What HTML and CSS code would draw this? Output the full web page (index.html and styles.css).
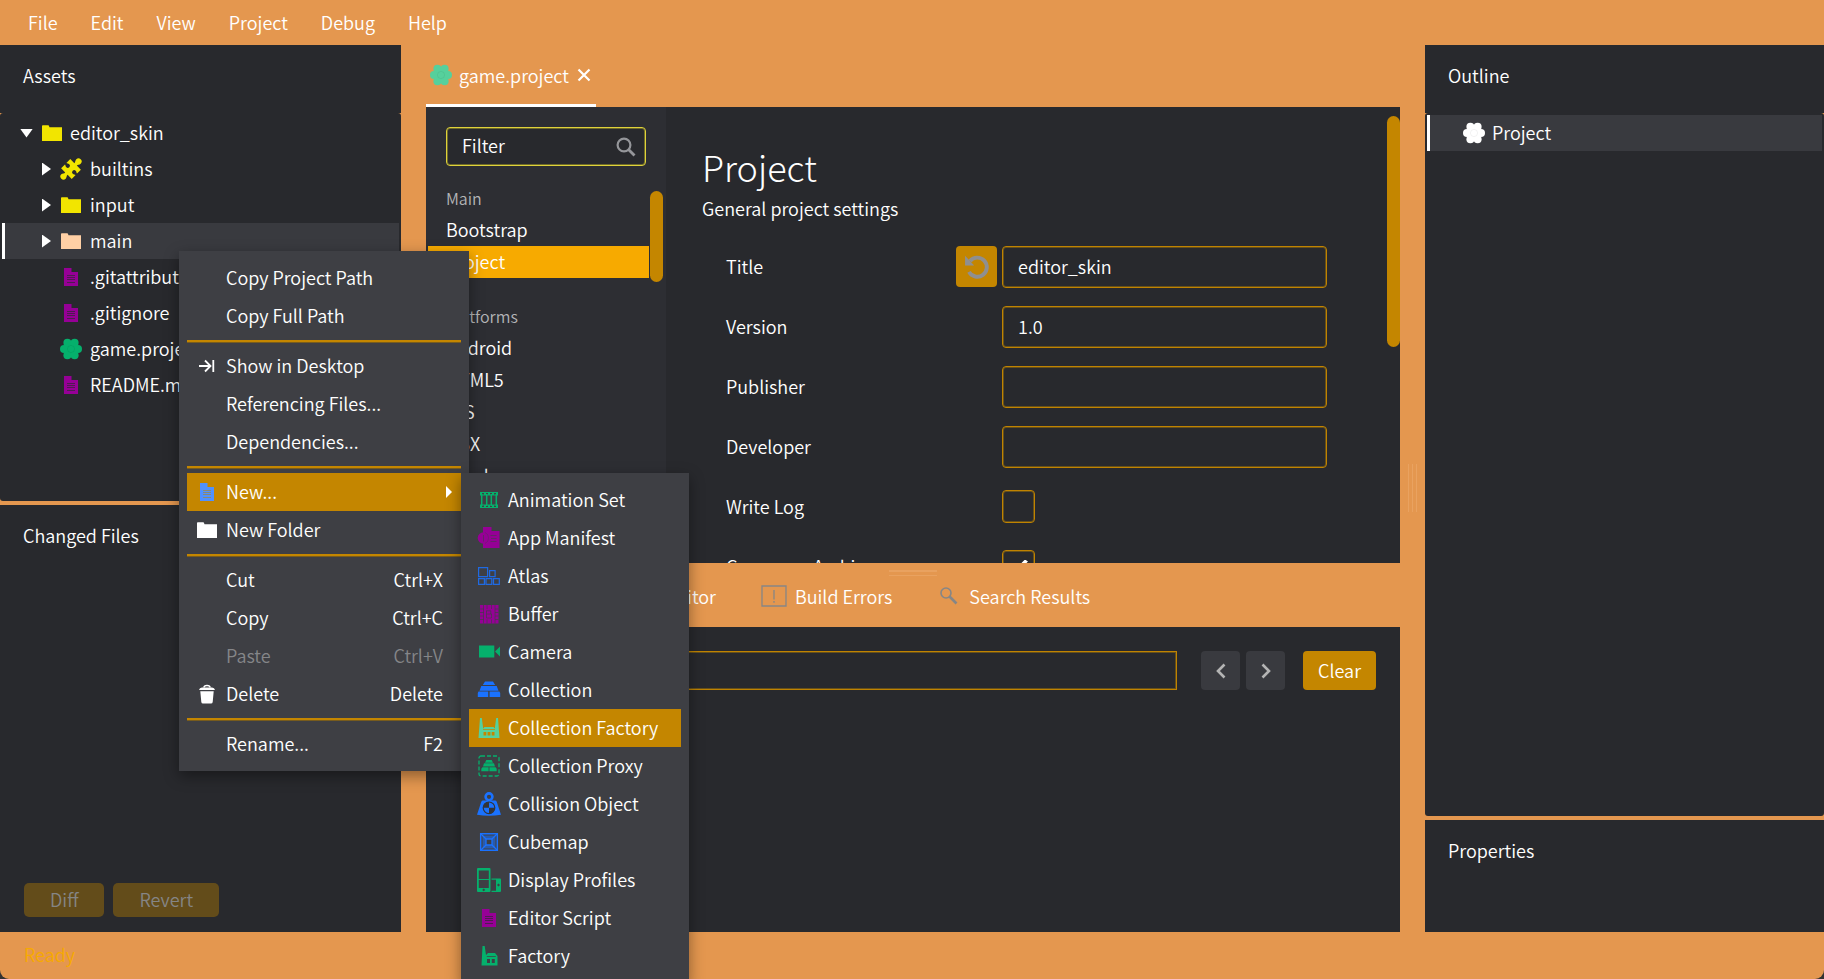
FILE: index.html
```html
<!DOCTYPE html>
<html lang="en">
<head>
<meta charset="utf-8">
<title>editor_skin</title>
<link rel="stylesheet" href="styles.css">
</head>
<body>
<svg class="sprite" aria-hidden="true">
  <symbol id="cog" viewBox="0 0 24 24">
    <g fill="currentColor"><circle cx="12" cy="12" r="7.4"/><circle cx="5" cy="12" r="4"/><circle cx="19" cy="12" r="4"/><circle cx="8.4" cy="5.8" r="4"/><circle cx="15.6" cy="5.8" r="4"/><circle cx="8.4" cy="18.2" r="4"/><circle cx="15.6" cy="18.2" r="4"/></g>
    <circle cx="12" cy="12" r="3.6" fill="none" stroke="#000" stroke-opacity=".05"/>
  </symbol>
  <symbol id="folder" viewBox="0 0 24 24">
    <path fill="currentColor" d="M2 5q0-.8.8-.8h5.400q.8 0 .8.8l.5 1.200H22V20H2z"/>
  </symbol>
  <symbol id="puzzle" viewBox="0 0 24 24">
    <path fill="currentColor" transform="rotate(45 12 12)" d="M4.500 5.500H10.300C10.500 4 8.900 3.200 8.900 1.400A3.100 3.100 0 0 1 15.100 1.400C15.100 3.200 13.500 4 13.700 5.500H19.500V11C18.500 11 18 9.900 16.500 9.900A2.100 2.100 0 0 0 16.500 14.100C18 14.100 18.500 13 19.500 13V18.500H13.700C13.500 20 15.100 20.800 15.100 22.600A3.100 3.100 0 0 1 8.900 22.600C8.900 20.800 10.500 20 10.300 18.500H4.500V13C5.500 13 6 14.100 7.500 14.100A2.100 2.100 0 0 0 7.500 9.900C6 9.900 5.500 11 4.500 11z"/>
  </symbol>
  <symbol id="doc" viewBox="0 0 24 24">
    <path fill="currentColor" d="M5 3h7.500v4H19v14H5z"/>
    <path fill="none" stroke="#28292d" stroke-opacity=".65" stroke-width="1" d="M8 10.500h8M8 12.500h8M8 14.500h8M8 17.500h8"/>
  </symbol>
  <symbol id="doc-light" viewBox="0 0 24 24">
    <path fill="currentColor" d="M5 3h7.500v4H19v14H5z"/>
    <path fill="none" stroke="#8c8a70" stroke-width="1" d="M8 10.500h8M8 12.500h8M8 14.500h8M8 17.500h8"/>
  </symbol>
  <symbol id="to-end" viewBox="0 0 24 24">
    <path fill="none" stroke="currentColor" stroke-width="1.800" d="M4 12h11M10 6.500l5.500 5.500-5.500 5.500M18.300 6v12"/>
  </symbol>
  <symbol id="trash" viewBox="0 0 24 24">
    <path fill="none" stroke="currentColor" stroke-width="1.500" d="M9 5.500q0-2 3-2t3 2"/>
    <path fill="currentColor" d="M4 8q.5-2.500 3-2.500h10q2.500 0 3 2.500zM5.300 9.300h13.400l-1 10.700q-.2 1.500-1.700 1.500H8q-1.500 0-1.700-1.500z"/>
  </symbol>
  <symbol id="search" viewBox="0 0 24 24">
    <circle cx="10" cy="10" r="6.400" fill="none" stroke="currentColor" stroke-width="2.200"/>
    <path stroke="currentColor" stroke-width="2.800" d="M14.500 14.500l6 6"/>
  </symbol>
  <symbol id="search-small" viewBox="0 0 24 24">
    <circle cx="9" cy="9" r="5" fill="none" stroke="currentColor" stroke-width="1.600"/>
    <path stroke="currentColor" stroke-width="2.600" d="M12.500 12.500l7 7"/>
  </symbol>
  <symbol id="alert" viewBox="0 0 26 22">
    <path fill="none" stroke="currentColor" stroke-width="1.300" d="M1 1h24v20H1zM13 5v9.500M13 16v1.700"/>
  </symbol>
  <symbol id="console" viewBox="0 0 24 24">
    <path fill="none" stroke="currentColor" stroke-width="1.500" d="M3 5h18v14H3zM6 9l3 3-3 3M11 15h5"/>
  </symbol>
  <symbol id="curve" viewBox="0 0 24 24">
    <path fill="none" stroke="currentColor" stroke-width="1.500" d="M3 3v18h18M5 18C12 18 11 7 20 7"/>
  </symbol>
  <symbol id="reset" viewBox="0 0 24 24">
    <path fill="none" stroke="currentColor" stroke-width="3.600" d="M5.500 6.500A8.800 8.800 0 1 1 4.600 16.500"/>
    <path fill="currentColor" d="M1 1.500V10.500H9.400z"/>
  </symbol>
  <symbol id="cross" viewBox="0 0 14 14">
    <path stroke="currentColor" stroke-width="2.200" d="M1.500 1.500l11 11M12.500 1.500l-11 11"/>
  </symbol>
  <symbol id="prev" viewBox="0 0 16 16">
    <path fill="none" stroke="currentColor" stroke-width="2.600" d="M11.500 1.500L5 8l6.500 6.500"/>
  </symbol>
  <symbol id="next" viewBox="0 0 16 16">
    <path fill="none" stroke="currentColor" stroke-width="2.600" d="M4.500 1.500L11 8l-6.500 6.500"/>
  </symbol>
  <symbol id="film" viewBox="0 0 24 24">
    <path fill="none" stroke="currentColor" stroke-width="1.500" d="M4.700 6v12M9.700 6v12M14.300 6v12M19.300 6v12"/>
    <path fill="currentColor" fill-rule="evenodd" d="M3 4h18v3.500H3zM5 5v1.400h2V5zM9 5v1.400h2V5zM13 5v1.400h2V5zM17 5v1.400h2V5zM3 16.500h18V20H3zM5 17.600V19h2v-1.400zM9 17.600V19h2v-1.400zM13 17.600V19h2v-1.400zM17 17.600V19h2v-1.400z"/>
  </symbol>
  <symbol id="manifest" viewBox="0 0 24 24">
    <path fill="currentColor" d="M6 1h8.500v4h8v17H6z"/><circle cx="6.500" cy="12" r="5.800" fill="currentColor"/>
    <path fill="none" stroke="#3e3f44" stroke-opacity=".55" d="M13.500 9.500h6M14 12.500h5.500M13.500 15.500h6M6.500 9v6.500"/>
    <path fill="none" stroke="#3e3f44" stroke-opacity=".35" d="M8 6.500a6 6 0 0 1 0 11"/>
  </symbol>
  <symbol id="atlas" viewBox="0 0 24 24">
    <path fill="none" stroke="currentColor" stroke-opacity=".85" stroke-width="1.200" d="M1.600 3.600h9v9h-9zM12.600 6.600h5.500v6h-5.500zM1.600 14.600h5.800v5.800H1.600zM9 14.600h5.800v5.800H9zM16.500 14.600h5.800v5.800h-5.800z"/>
  </symbol>
  <symbol id="buffer" viewBox="0 0 24 24">
    <path fill="currentColor" d="M3 3h18.500v18.500H3z"/>
    <path fill="none" stroke="#3e3f44" stroke-width=".9" stroke-opacity=".75" d="M6.500 3v18.500M18 3v18.500M10 3v4M14.500 3v4M10 17.500v4M14.500 17.500v4M3 7h4M3 10.500h4M3 14h4M3 17.500h4M18 7h3.500M18 10.500h3.500M18 14h3.500M18 17.500h3.500M9.500 8.500v7.500h5v-4h-5M9.500 8.800h4.300v3.200"/>
  </symbol>
  <symbol id="camera" viewBox="0 0 24 24">
    <path fill="currentColor" d="M2 5.500h15.300v12H2zM18 11.500l5-5v10z"/>
  </symbol>
  <symbol id="bricks" viewBox="0 0 24 24">
    <path fill="currentColor" d="M8 3.500h8l2.200 3.600H5.800zM4.300 8h15.400l1.800 4.700h-19zM1.500 13.600h9.700V19H.8v-4zM12.600 13.600h9.800l.8 1.400v4H12.600z"/>
  </symbol>
  <symbol id="coll-factory" viewBox="0 0 24 24">
    <path fill="currentColor" fill-rule="evenodd" d="M3 2h1.800l1.400 10.500 1.300-1.500h9l1.300 1.500L19.200 2H21l1.500 20h-21zM6 13.300v.8h12v-.8zM6.500 16v3.500h2.800V16zM10.600 16v3.500h2.800V16zM14.700 16v3.500h2.800V16z"/>
  </symbol>
  <symbol id="coll-proxy" viewBox="0 0 24 24">
    <rect x="2" y="2" width="20" height="20" rx="2" fill="none" stroke="currentColor" stroke-width="1.300" stroke-dasharray="4 2"/>
    <path fill="currentColor" d="M9.300 6h5.400l1.300 2.700H8zM7 9.200h10l1 3.400H6zM5.500 13.200h6.100v4.100H4.300v-2.600zM12.400 13.200h6.100l1.200 1.500v2.600h-7.300z"/>
  </symbol>
  <symbol id="weight" viewBox="0 0 24 24">
    <circle cx="12" cy="4.800" r="3.400" fill="none" stroke="currentColor" stroke-width="2.600"/>
    <path fill="currentColor" d="M6 8.500h12q1.300 0 1.700 1.300L24 22.800q-12 2-24 0L4.300 9.800Q4.700 8.500 6 8.500z"/>
    <circle cx="12" cy="15.800" r="5.800" fill="none" stroke="#333438" stroke-width="1.200"/>
    <path fill="#333438" d="M12 15.800V10a5.800 5.800 0 0 0-5.800 5.800zM12 15.800v5.800a5.800 5.800 0 0 0 5.800-5.800z"/>
  </symbol>
  <symbol id="cubemap" viewBox="0 0 24 24">
    <path fill="none" stroke="currentColor" stroke-width="1.500" d="M3.700 3.700h16.600v16.600H3.700z"/>
    <path fill="currentColor" fill-opacity=".55" fill-rule="evenodd" d="M5.500 5.500h13v13h-13zM9 9v6h6V9z"/>
    <path fill="none" stroke="currentColor" stroke-width="1.300" d="M4 4l5 5M20 4l-5 5M4 20l5-5M20 20l-5-5M9 9h6v6H9z"/>
  </symbol>
  <symbol id="displays" viewBox="0 0 24 24">
    <path fill="currentColor" fill-rule="evenodd" d="M1 0h11.500q1 0 1 1v22q0 1-1 1H1q-1 0-1-1V1q0-1 1-1zM1.800 2.500V11h10V2.500zM1.800 12v8h10v-8zM6.700 20.600l-1.500 1.300 1.500 1.300 1.500-1.300z"/>
    <path fill="currentColor" fill-rule="evenodd" d="M14.500 10.500H23q1 0 1 1V23q0 1-1 1h-8.500v-1.200H19v-11.100h-4.500zM21.500 15.500l-1.500 1.500 1.500 1.500 1.500-1.500z"/>
  </symbol>
  <symbol id="factory" viewBox="0 0 24 24">
    <path fill="currentColor" fill-rule="evenodd" d="M5.500 2h2.200l1.300 9 2-2h7l2.500 3v9.500H4.500zM10 15v4h3v-4zM14.800 15v4h3v-4zM9.800 12.300v.7h9v-.7z"/>
  </symbol>
</svg>

<nav class="menubar" aria-label="Main menu">
  <button>File</button><button>Edit</button><button>View</button><button>Project</button><button>Debug</button><button>Help</button>
</nav>

<main class="workspace">
  <div class="column column-left">
    <section class="panel">
      <h2 class="panel-title">Assets</h2>
      <ul class="tree">
        <li class="row root"><span class="arrow arrow-down"></span><svg class="icon yellow"><use href="#folder"/></svg><span>editor_skin</span></li>
        <li class="row"><span class="arrow"></span><svg class="icon yellow"><use href="#puzzle"/></svg><span>builtins</span></li>
        <li class="row"><span class="arrow"></span><svg class="icon yellow"><use href="#folder"/></svg><span>input</span></li>
        <li class="row selected"><span class="arrow"></span><svg class="icon peach"><use href="#folder"/></svg><span>main</span></li>
        <li class="row leaf"><svg class="icon purple"><use href="#doc"/></svg><span>.gitattributes</span></li>
        <li class="row leaf"><svg class="icon purple"><use href="#doc"/></svg><span>.gitignore</span></li>
        <li class="row leaf"><svg class="icon green"><use href="#cog"/></svg><span>game.project</span></li>
        <li class="row leaf"><svg class="icon purple"><use href="#doc"/></svg><span>README.md</span></li>
      </ul>
    </section>
    <section class="panel changed">
      <h2 class="panel-title">Changed Files</h2>
      <div class="changed-actions"><button class="btn" disabled>Diff</button><button class="btn" disabled>Revert</button></div>
    </section>
  </div>

  <div class="column column-center">
    <div class="tabs">
      <div class="tab tab-active"><svg class="icon mint"><use href="#cog"/></svg><span>game.project</span><button class="tab-close" aria-label="Close"><svg><use href="#cross"/></svg></button></div>
    </div>
    <section class="editor">
      <aside class="sections">
        <div class="filter"><input type="text" value="Filter" aria-label="Filter"><svg class="icon"><use href="#search"/></svg></div>
        <ul class="section-list">
          <li class="group">Main</li>
          <li>Bootstrap</li>
          <li class="current">Project</li>
          <li class="group group-next">Platforms</li>
          <li>Android</li>
          <li>HTML5</li>
          <li>iOS</li>
          <li>OSX</li>
          <li>Windows</li>
        </ul>
        <span class="thumb thumb-list"></span>
      </aside>
      <form class="settings">
        <h1>Project</h1>
        <p>General project settings</p>
        <div class="field"><label for="title">Title</label><button type="button" class="reset" aria-label="Reset"><svg><use href="#reset"/></svg></button><input id="title" type="text" value="editor_skin"></div>
        <div class="field"><label for="version">Version</label><input id="version" type="text" value="1.0"></div>
        <div class="field"><label for="publisher">Publisher</label><input id="publisher" type="text"></div>
        <div class="field"><label for="developer">Developer</label><input id="developer" type="text"></div>
        <div class="field"><label for="log">Write Log</label><input id="log" type="checkbox"></div>
        <div class="field"><label for="compress">Compress Archive</label><input id="compress" type="checkbox" checked></div>
        <span class="thumb thumb-form"></span>
      </form>
    </section>
    <div class="tabs tool-tabs">
      <span class="grip grip-h"></span>
      <button class="tool-tab"><svg class="icon"><use href="#console"/></svg>Console</button>
      <button class="tool-tab"><svg class="icon"><use href="#curve"/></svg>Curve Editor</button>
      <button class="tool-tab"><svg class="icon icon-wide"><use href="#alert"/></svg>Build Errors</button>
      <button class="tool-tab"><svg class="icon"><use href="#search-small"/></svg>Search Results</button>
    </div>
    <section class="console">
      <div class="console-bar">
        <input type="text" aria-label="Find in console">
        <button class="square" aria-label="Previous"><svg><use href="#prev"/></svg></button>
        <button class="square" aria-label="Next"><svg><use href="#next"/></svg></button>
        <button class="clear">Clear</button>
      </div>
    </section>
    <span class="grip grip-v"></span>
  </div>

  <div class="column column-right">
    <section class="panel">
      <h2 class="panel-title">Outline</h2>
      <ul class="tree">
        <li class="row outline-row selected"><svg class="icon"><use href="#cog"/></svg><span>Project</span></li>
      </ul>
    </section>
    <section class="panel">
      <h2 class="panel-title">Properties</h2>
    </section>
  </div>
</main>

<footer class="status">Ready</footer>

<ul class="menu context-menu">
  <li class="item">Copy Project Path</li>
  <li class="item">Copy Full Path</li>
  <li class="rule"></li>
  <li class="item"><svg class="icon"><use href="#to-end"/></svg>Show in Desktop</li>
  <li class="item">Referencing Files...</li>
  <li class="item">Dependencies...</li>
  <li class="rule"></li>
  <li class="item active has-sub"><svg class="icon sky"><use href="#doc-light"/></svg>New...
    <ul class="menu submenu">
      <li class="item"><svg class="icon green"><use href="#film"/></svg>Animation Set</li>
      <li class="item"><svg class="icon purple"><use href="#manifest"/></svg>App Manifest</li>
      <li class="item"><svg class="icon blue"><use href="#atlas"/></svg>Atlas</li>
      <li class="item"><svg class="icon purple"><use href="#buffer"/></svg>Buffer</li>
      <li class="item"><svg class="icon green"><use href="#camera"/></svg>Camera</li>
      <li class="item"><svg class="icon blue"><use href="#bricks"/></svg>Collection</li>
      <li class="item active"><svg class="icon mint"><use href="#coll-factory"/></svg>Collection Factory</li>
      <li class="item"><svg class="icon green"><use href="#coll-proxy"/></svg>Collection Proxy</li>
      <li class="item"><svg class="icon blue"><use href="#weight"/></svg>Collision Object</li>
      <li class="item"><svg class="icon blue"><use href="#cubemap"/></svg>Cubemap</li>
      <li class="item"><svg class="icon green"><use href="#displays"/></svg>Display Profiles</li>
      <li class="item"><svg class="icon purple"><use href="#doc"/></svg>Editor Script</li>
      <li class="item"><svg class="icon green"><use href="#factory"/></svg>Factory</li>
    </ul>
  </li>
  <li class="item"><svg class="icon"><use href="#folder"/></svg>New Folder</li>
  <li class="rule"></li>
  <li class="item">Cut<kbd>Ctrl+X</kbd></li>
  <li class="item">Copy<kbd>Ctrl+C</kbd></li>
  <li class="item disabled">Paste<kbd>Ctrl+V</kbd></li>
  <li class="item"><svg class="icon"><use href="#trash"/></svg>Delete<kbd>Delete</kbd></li>
  <li class="rule"></li>
  <li class="item">Rename...<kbd>F2</kbd></li>
</ul>
</body>
</html>
```
FILE: styles.css
```css
:root {
  --orange: #e4974f;
  --panel: #28292d;
  --raised: #2d2e33;
  --row: #393a3f;
  --menu: #3e3f44;
  --gold: #c48600;
  --amber: #f7aa00;
  --text: #fff;
}

* { box-sizing: border-box; }

html { background: #333; }

body {
  margin: 0;
  height: 100vh;
  overflow: hidden;
  position: relative;
  display: flex;
  flex-direction: column;
  background: var(--orange);
  border-radius: 0 0 9px 9px;
  color: var(--text);
  font: 350 18px/24px "Noto Sans CJK SC DemiLight", "Noto Sans CJK SC", "Noto Sans", sans-serif;
}

button, input, kbd { font: inherit; color: inherit; }
button { border: 0; padding: 0; background: none; }
ul { list-style: none; margin: 0; padding: 0; }
.sprite { display: none; }
.icon { width: 24px; height: 24px; flex: none; }

.yellow { color: #f2e500; }
.peach { color: #ffd0a5; }
.purple { color: #960096; }
.green { color: #05b06c; }
.mint { color: #56d09c; }
.blue { color: #1a72ff; }
.sky { color: #5091ff; }

.menubar {
  flex: none;
  height: 45px;
  padding: 0 28px 2px;
  display: flex;
  gap: 33px;
  align-items: center;
}

.workspace {
  flex: 1;
  min-height: 0;
  display: grid;
  grid-template-columns: 401fr 974fr 399fr;
  column-gap: 25px;
}

.column { display: grid; min-width: 0; min-height: 0; gap: 4px; }
.column-left { grid-template-rows: 456fr 427fr; }
.column-right { grid-template-rows: 771fr 112fr; }
.column-center { position: relative; gap: 0; grid-template-rows: 62px 456fr 64px 305fr; }

.panel { display: flex; flex-direction: column; min-height: 0; }
.panel-title {
  margin: 0;
  padding: 18px 23px 26px;
  background: var(--panel);
  font-size: 18px;
  font-weight: inherit;
  line-height: 24px;
}
.panel:not(:has(.tree)) { background: var(--panel); }
.tree { flex: 1; padding: 2px; background: var(--panel); border-radius: 3px; }

.row { display: flex; align-items: center; height: 36px; padding-left: 38px; gap: 7px; }
.row > span:last-child { padding-bottom: 2px; }
.row.selected { background: var(--row); box-shadow: inset 3px 0 #fff; }
.row.root { padding-left: 18px; gap: 6px; }
.row.leaf { padding-left: 57px; gap: 7px; }
.outline-row.row { padding-left: 35px; gap: 6px; }

.arrow {
  width: 10px;
  margin-left: 2px;
  height: 13px;
  background: #fff;
  clip-path: polygon(0 0, 9px 50%, 0 100%);
}
.arrow-down {
  width: 13px;
  height: 9px;
  margin: 0 1px 0 0;
  clip-path: polygon(0 0, 100% 0, 50% 100%);
}
.changed { justify-content: space-between; }
.changed-actions { display: flex; gap: 9px; padding: 0 24px 15px; }
.btn {
  height: 34px;
  padding: 0 26px 2px;
  border-radius: 5px;
  background: #634c1a;
  color: #858585;
}

.tabs { display: flex; align-items: stretch; }
.tab { display: flex; align-items: center; gap: 6px; padding: 0 5px 3px 3px; }
.tab-active { box-shadow: inset 0 -3px #fff; }
.tab-close { display: flex; margin-left: 2px; }
.tab-close svg { width: 14px; height: 14px; }

.editor { display: grid; grid-template-columns: 240px 1fr; min-height: 0; background: var(--panel); }

.sections { position: relative; overflow: hidden; background: var(--raised); padding-top: 20px; }
.filter { position: relative; margin: 0 20px 17px; }
input[type="text"] {
  display: block;
  width: 100%;
  height: 42px;
  padding: 0 15px 2px;
  border: 1px solid #c08300;
  border-radius: 4px;
  background: var(--panel);
  box-shadow: inset 0 0 0 1px #66501b;
  outline: 0;
}
.filter input { height: 39px; padding-bottom: 3px; border-color: #dfd23a; box-shadow: inset 0 0 0 1px #6f6b2b; }
.filter .icon { position: absolute; right: 8px; top: 8px; color: #95969a; }

.section-list li { height: 32px; margin: 0 17px 0 2px; padding-left: 18px; line-height: 30px; }
.section-list .group { color: #b4b5b7; font-size: 16px; height: 31px; }
.section-list .group-next { margin-top: 23px; }
.section-list .current { background: var(--amber); }

.thumb { position: absolute; width: 13px; border-radius: 7px; background: var(--gold); }
.thumb-list { right: 3px; top: 84px; height: 91px; }
.thumb-form { right: 0; top: 9px; height: 231px; }

.settings { position: relative; overflow: hidden; padding: 36px 73px 0 36px; }
.settings h1 { margin: 0 0 7px; font: 200 36px/46px "Noto Sans CJK SC", "Noto Sans", sans-serif; }
.settings p { margin: 0 0 26px; }
.field {
  display: grid;
  grid-template-columns: 225px 41px 1fr;
  column-gap: 5px;
  align-items: center;
  height: 42px;
  margin: 0 0 18px 24px;
}
.field label { padding-bottom: 2px; }
.field input { grid-column: 3; }
.reset {
  display: grid;
  place-items: center;
  align-self: start;
  height: 41px;
  border-radius: 4px;
  background: var(--gold);
  color: #8f8f8f;
}
.reset svg { width: 26px; height: 26px; }
.field input[type="checkbox"] {
  appearance: none;
  display: grid;
  place-content: center;
  margin: 0 0 1px;
  width: 33px;
  height: 33px;
  border: 1px solid #c08300;
  border-radius: 4px;
  box-shadow: inset 0 0 0 1px #66501b;
}
.field input:checked::before {
  content: "";
  width: 19px;
  height: 14px;
  background: #fff;
  clip-path: polygon(0 55%, 14% 38%, 36% 65%, 84% 0, 100% 14%, 38% 100%);
}

.tool-tabs { position: relative; align-items: center; padding: 2px 0 0 11px; gap: 45px; }
.tool-tab { display: flex; align-items: center; gap: 8px; white-space: nowrap; }
.tool-tab .icon { color: #868686; }
.tool-tab .icon-wide { width: 26px; height: 22px; }

.grip { position: absolute; }
.grip-h { left: 463px; top: 7px; width: 48px; height: 6px; border: solid #e9a260; border-width: 2px 0 1px; }
.grip-v { left: 982px; top: 419px; width: 10px; height: 48px; background: repeating-linear-gradient(90deg, #e9a260 0 1px, transparent 1px 4px); }

.console { background: var(--panel); padding: 24px; }
.console-bar { display: flex; gap: 6px; }
.console-bar input { flex: 1; height: 39px; border-radius: 0; margin-right: 18px; }
.square { display: grid; place-items: center; width: 39px; height: 39px; border-radius: 4px; background: var(--row); color: #b4b4b4; }
.square svg { width: 16px; height: 16px; }
.clear { height: 39px; margin-left: 12px; padding: 0 15px 1px; border-radius: 4px; background: var(--gold); }

.status { flex: none; height: 47px; padding: 0 24px; line-height: 44px; color: var(--amber); }

.menu {
  position: absolute;
  padding: 8px;
  background: var(--menu);
  box-shadow: 0 5px 14px rgb(0 0 0 / 40%);
}
.context-menu { left: 179px; top: 251px; width: 290px; }
.submenu { left: 100%; top: 0; width: 228px; }

.item { position: relative; display: flex; align-items: center; height: 38px; padding: 0 18px 2px 39px; white-space: nowrap; }
.item > .icon { position: absolute; left: 8px; top: 7px; }
.item.active { background: var(--gold); }
.item.disabled { color: #858689; }
.item kbd { margin-left: auto; }
.has-sub::after {
  content: "";
  position: absolute;
  right: 9px;
  top: 13px;
  width: 6px;
  height: 12px;
  background: #fff;
  clip-path: polygon(0 0, 100% 50%, 0 100%);
}
.rule { height: 12px; padding-top: 5px; }
.rule::before { content: ""; display: block; height: 2px; background: var(--gold); border-bottom: 1px solid #785c1d; }
```
